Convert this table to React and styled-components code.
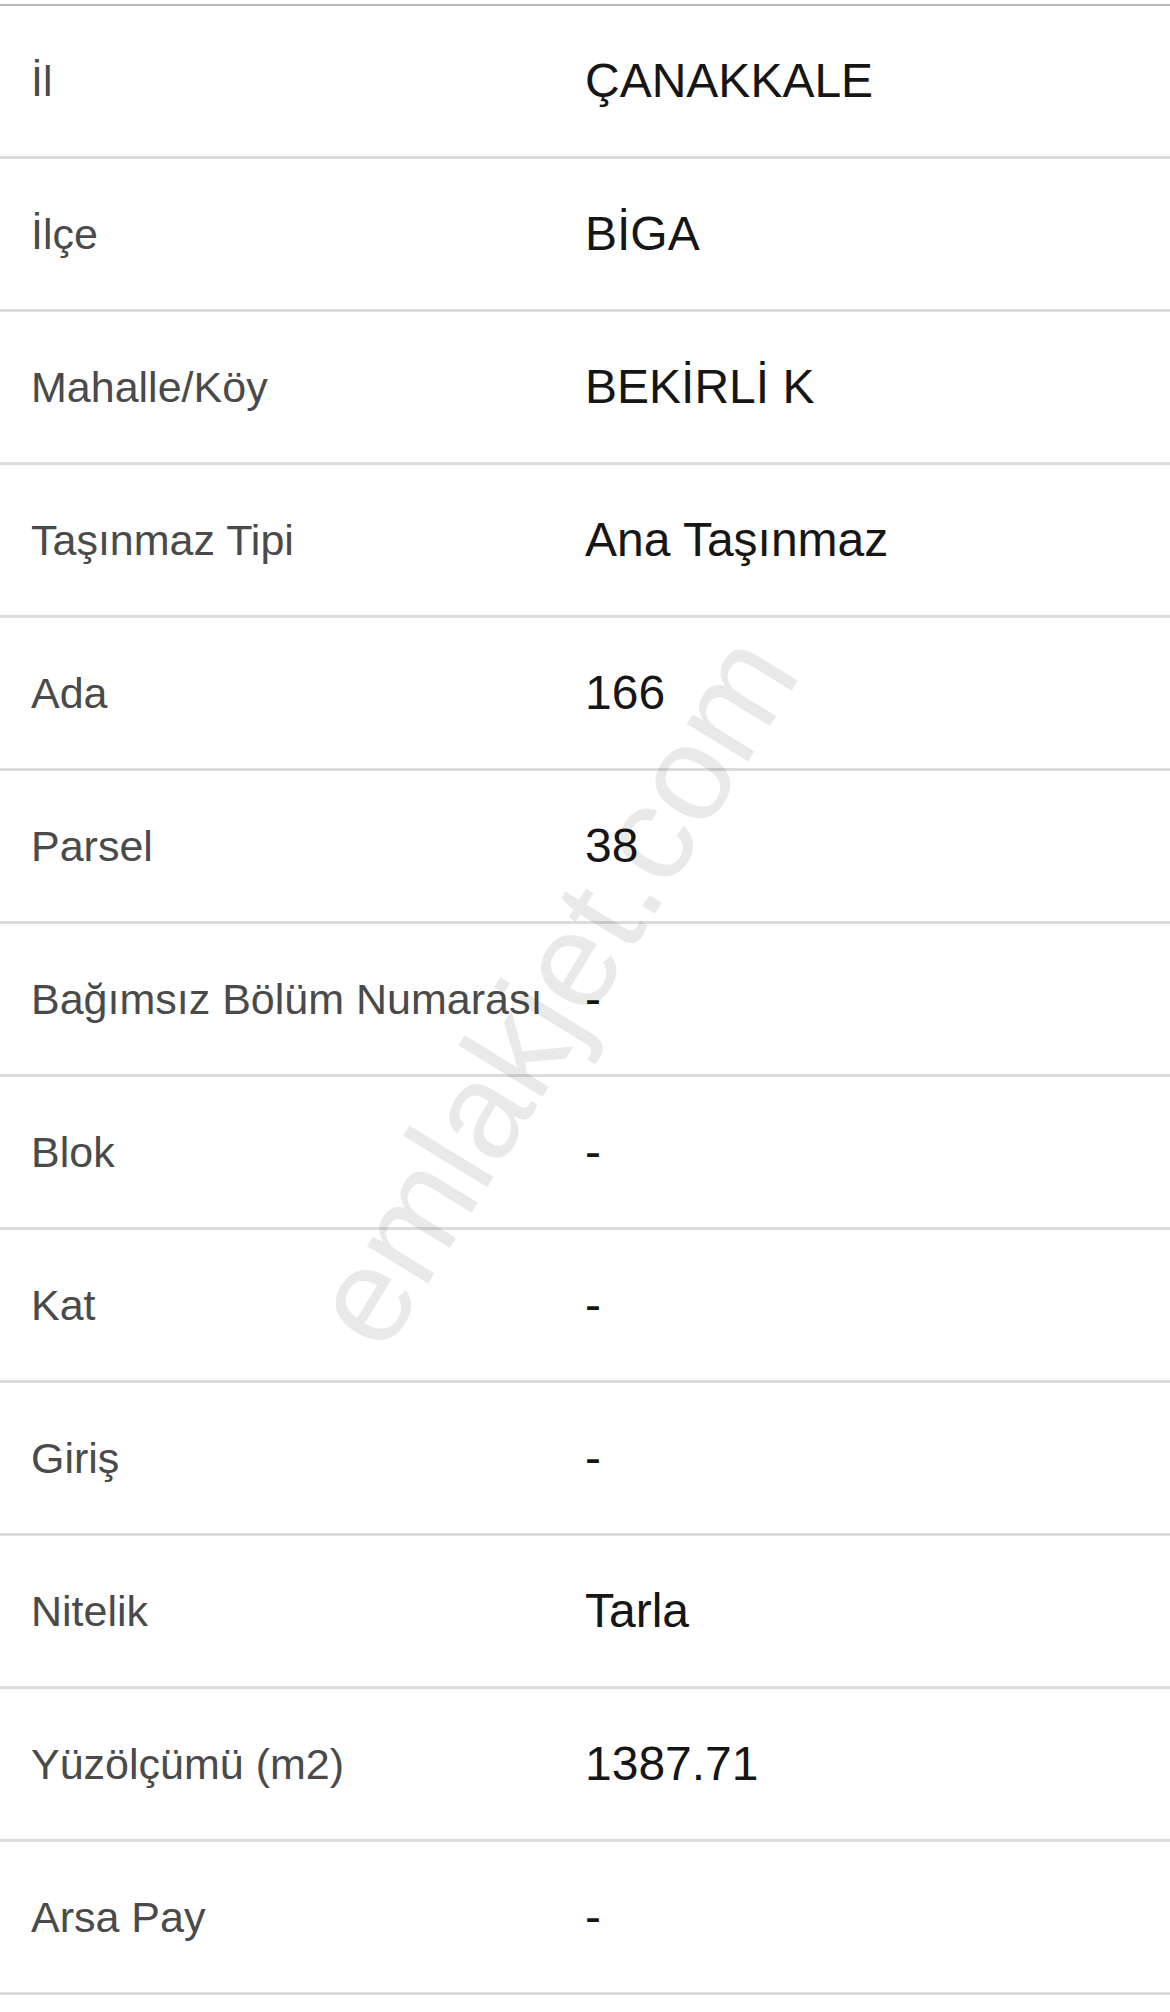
import styled, { createGlobalStyle } from 'styled-components'

const GlobalStyle = createGlobalStyle`
	html, body {
		margin: 0;
		padding: 0;
		background: #ffffff;
	}
	body {
		font-family: "Liberation Sans", Arial, Helvetica, sans-serif;
		-webkit-font-smoothing: antialiased;
	}
`

const Page = styled.div`
	position: relative;
	width: 1170px;
	min-height: 2012px;
	padding-top: 4px;
	box-sizing: border-box;
	overflow: hidden;
	background: #ffffff;
`

const InfoList = styled.div`
	display: flex;
	flex-direction: column;
	border-top: 2px solid #b8b8b8;
`

const InfoRow = styled.div`
	display: grid;
	grid-template-columns: 554px 1fr;
	align-items: center;
	height: 150px;
	padding-left: 31px;
	border-bottom: 3px solid #dcdcdc;
`

const InfoLabel = styled.div`
	font-size: 43px;
	color: #4a4a4a;
	white-space: nowrap;
	line-height: 1;
`

const InfoValue = styled.div`
	font-size: 48px;
	color: #161616;
	white-space: nowrap;
	line-height: 1;
`

const Watermark = styled.div`
	position: absolute;
	left: 553px;
	top: 990px;
	transform: translate(-50%, -50%) rotate(-58.5deg);
	font-size: 136px;
	color: rgba(0, 0, 0, 0.085);
	white-space: nowrap;
	pointer-events: none;
	line-height: 1;
`

const rows = [
	{ label: 'İl', value: 'ÇANAKKALE' },
	{ label: 'İlçe', value: 'BİGA' },
	{ label: 'Mahalle/Köy', value: 'BEKİRLİ K' },
	{ label: 'Taşınmaz Tipi', value: 'Ana Taşınmaz' },
	{ label: 'Ada', value: '166' },
	{ label: 'Parsel', value: '38' },
	{ label: 'Bağımsız Bölüm Numarası', value: '-' },
	{ label: 'Blok', value: '-' },
	{ label: 'Kat', value: '-' },
	{ label: 'Giriş', value: '-' },
	{ label: 'Nitelik', value: 'Tarla' },
	{ label: 'Yüzölçümü (m2)', value: '1387.71' },
	{ label: 'Arsa Pay', value: '-' },
]

const App = () => {
	return (
		<>
			<GlobalStyle />
			<Page>
				<InfoList>
					{rows.map((item, index) => (
						<InfoRow key={index}>
							<InfoLabel>{item.label}</InfoLabel>
							<InfoValue>{item.value}</InfoValue>
						</InfoRow>
					))}
				</InfoList>
				<Watermark>emlakjet.com</Watermark>
			</Page>
		</>
	)
}
export default App
